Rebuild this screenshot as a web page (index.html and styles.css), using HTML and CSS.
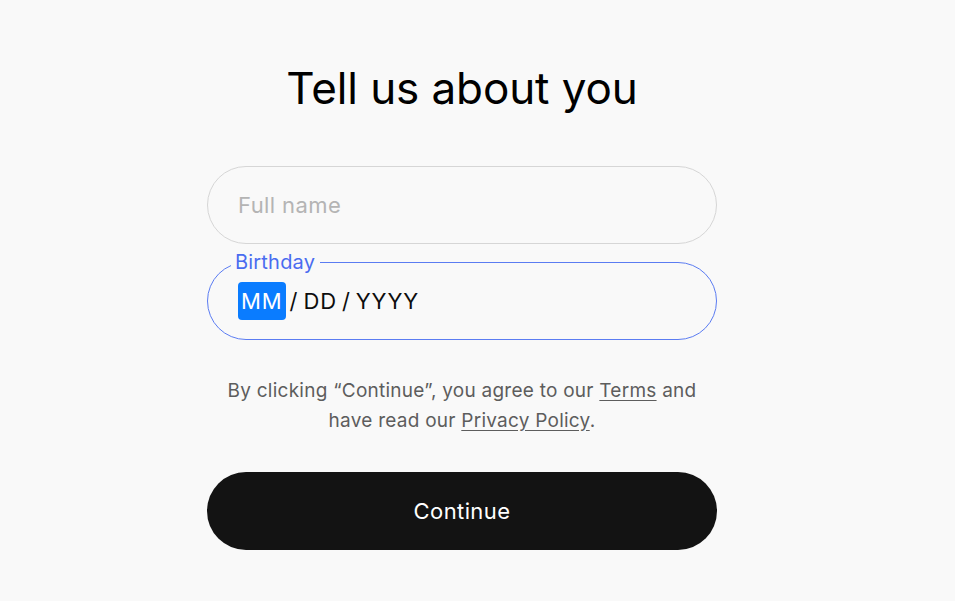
FILE: index.html
```html
<!DOCTYPE html>
<html lang="en">
<head>
    <meta charset="UTF-8">
    <meta name="viewport" content="width=device-width, initial-scale=1.0">
    <title>Tell us about you</title>
    <link rel="stylesheet" href="styles.css">
</head>
<body>
    <div class="container">
        <h1>Tell us about you</h1>
        <form class="form">
            <div class="field">
                <input type="text" placeholder="Full name">
            </div>
            <fieldset class="field field-active">
                <legend>Birthday</legend>
                <div class="date">
                    <span class="seg seg-selected">MM</span>
                    <span class="sep">/</span>
                    <span class="seg">DD</span>
                    <span class="sep">/</span>
                    <span class="seg">YYYY</span>
                </div>
            </fieldset>
            <p class="terms">
                By clicking “Continue”, you agree to our <a href="#">Terms</a> and
                have read our <a href="#">Privacy Policy</a>.
            </p>
            <button type="submit">Continue</button>
        </form>
    </div>
</body>
</html>
```

FILE: styles.css
```css
body {
    font-family: Inter, "Noto Sans", sans-serif;
    background-color: #f9f9f9;
    margin: 0;
    color: #0d0d0d;
}
.container {
    width: 510px;
    margin-left: 207px;
    padding-top: 60px;
    text-align: center;
}
h1 {
    font-size: 44px;
    font-weight: 400;
    letter-spacing: -0.1px;
    margin: 0 0 50px;
    line-height: 56px;
    color: #000;
}
.form {
    display: flex;
    flex-direction: column;
}
.field {
    box-sizing: border-box;
    height: 78px;
    border: 1px solid #d6d6d6;
    border-radius: 39px;
    margin: 0;
    padding: 0 30px;
    display: flex;
    align-items: center;
    min-width: 0;
    text-align: left;
}
.field input {
    width: 100%;
    border: none;
    background: transparent;
    outline: none;
    font-family: inherit;
    font-size: 22px;
    letter-spacing: 0.4px;
    color: #0d0d0d;
    padding: 0;
}
.field input::placeholder {
    color: #b4b4b4;
}
.field-active {
    margin-top: 9px;
    height: 87px;
    border-color: #5b7cf2;
    display: block;
    padding: 0 28px 0 30px;
}
.field-active legend {
    color: #4a6cf0;
    font-size: 20px;
    letter-spacing: 0.2px;
    padding: 0 5px 0 4px;
    margin-left: -7px;
    line-height: 18px;
}
.date {
    display: flex;
    align-items: center;
    gap: 5px;
    font-size: 22px;
    letter-spacing: 0.9px;
    height: 58px;
    margin-top: 1px;
}
.seg-selected {
    background-color: #0a7cff;
    color: #fff;
    border-radius: 4px;
    padding: 6px 3px 6px 3px;
    margin-right: -1px;
}
.terms {
    color: #5d5d5d;
    font-size: 19px;
    letter-spacing: 0.25px;
    line-height: 30px;
    margin: 36px 0 36px;
}
.terms a {
    color: #5d5d5d;
    text-decoration: underline;
    text-underline-offset: 3px;
}
button {
    height: 78px;
    border: none;
    border-radius: 39px;
    background-color: #131313;
    color: #fff;
    font-family: inherit;
    font-size: 22px;
    letter-spacing: 0.4px;
    cursor: pointer;
}
```
